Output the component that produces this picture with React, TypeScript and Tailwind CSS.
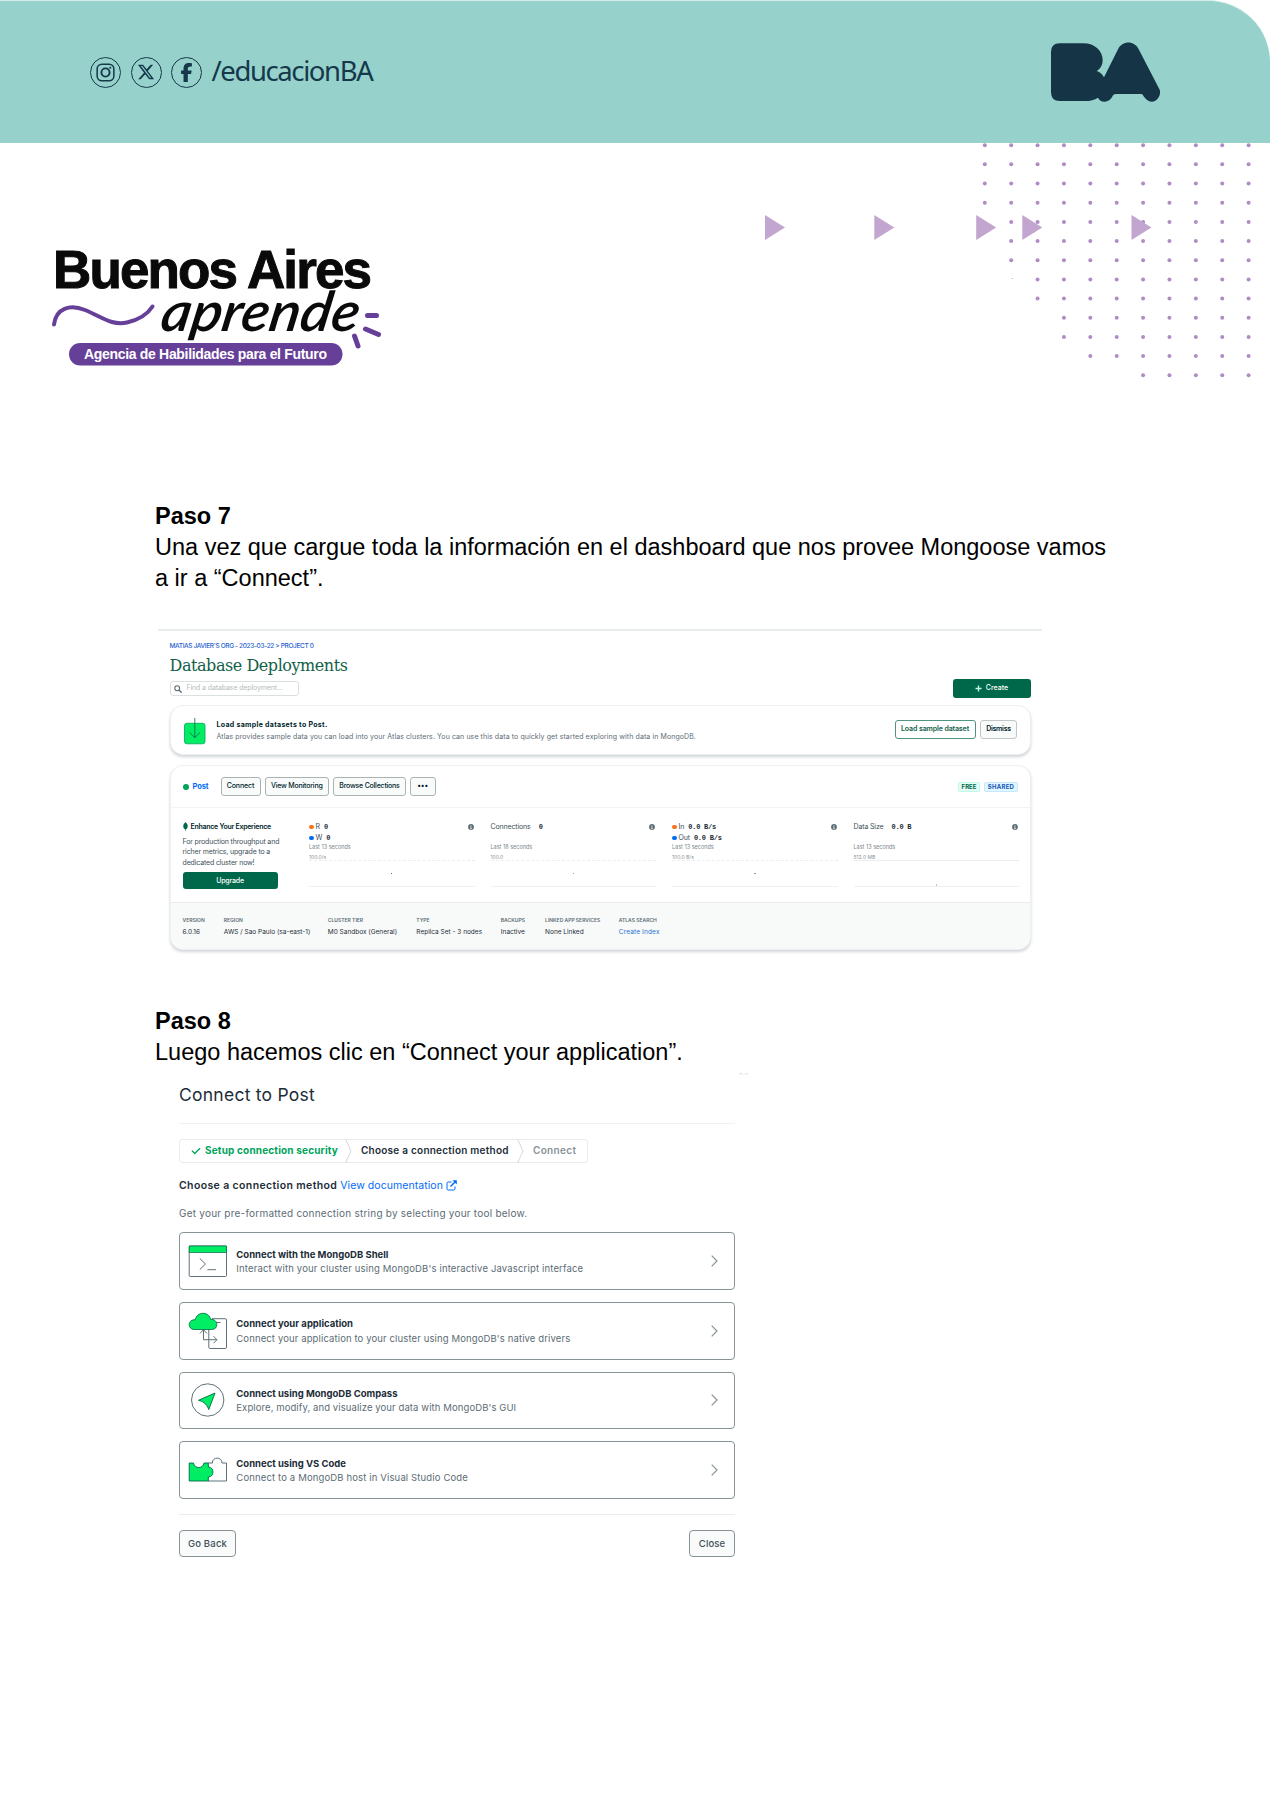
import React from 'react';
import { FaFacebookF, FaXTwitter, FaCheck } from 'react-icons/fa6';

const SANS = "font-['Inter',sans-serif]";

const dotColumns = [0, 1, 2, 3, 4, 5, 6, 7, 8, 9, 10];
const dotRowStarts = [0, 0, 0, 0, 1, 1, 1, 2, 2, 3, 3, 4, 6];
const arrowOffsets = [0, 109.3, 211.2, 257.3, 366.5];

function SocialBadge({ children }: { children: React.ReactNode }) {
  return (
    <span className="flex size-[31px] items-center justify-center rounded-full border-[1.5px] border-[#15384a]">
      {children}
    </span>
  );
}

function BaLogo() {
  return (
    <svg viewBox="270 122 335 185" className="h-[61.7px] w-[111.7px]" fill="#153547">
      <path d="M273 155Q273 129 299 129H370C405 129 428 152 428 180C428 195 420 207 410 212C420 215 428 223 432 231L474 147C486 120 524 120 536 147L599 268C604 284 592 304 575 304C562 304 555 294 549 285Q547 281 543 281H470Q462 281 459 285C454 296 447 304 434 304C424 304 417 299 414 292C404 299 390 302 375 302H299Q273 302 273 276Z" />
    </svg>
  );
}

function Header() {
  return (
    <header className="flex h-[143px] w-[1270px] items-start rounded-tr-[62px] border-t border-[#d5edea] bg-[#96d1cc] pl-[90px] pt-[40px] text-[#15384a]">
      <div className="flex h-[62px] items-center gap-[9.5px]">
        <SocialBadge>
          <svg viewBox="0 0 20 20" className="size-[19px]" fill="none" stroke="#15384a" strokeWidth="1.6">
            <rect x="1.2" y="1.2" width="17.6" height="17.6" rx="5" />
            <circle cx="10" cy="10" r="4.3" strokeWidth="2" />
            <circle cx="15" cy="5" r="1.1" fill="#15384a" stroke="none" />
          </svg>
        </SocialBadge>
        <SocialBadge>
          <FaXTwitter className="size-[18px]" />
        </SocialBadge>
        <SocialBadge>
          <FaFacebookF className="size-[19px]" />
        </SocialBadge>
        <span className="mt-[-2px] font-['Noto_Sans',sans-serif] text-[27.5px] tracking-[-1.4px] leading-none">/educacionBA</span>
      </div>
      <div className="ml-auto mr-[108.3px]">
        <BaLogo />
      </div>
    </header>
  );
}

function BrandLogo() {
  return (
    <svg viewBox="0 0 340 130" className="h-[130px] w-[340px]">
      <text x="3" y="47.5" fontFamily="'Liberation Sans', Arial, sans-serif" fontWeight="700" fontSize="53" textLength="319" lengthAdjust="spacing" fill="#0a0a0a" stroke="#0a0a0a" strokeWidth="1">Buenos Aires</text>
      <rect x="19" y="103" width="273.5" height="22.5" rx="11.2" fill="#663f98" />
      <text x="34" y="118.6" fontFamily="'Liberation Sans', Arial, sans-serif" fontWeight="700" fontSize="14" textLength="243" lengthAdjust="spacing" fill="#fff">Agencia de Habilidades para el Futuro</text>
      <text x="0" y="0" transform="translate(109 91) skewX(-10)" fontFamily="Lato, sans-serif" fontStyle="italic" fontWeight="600" fontSize="55" textLength="198" lengthAdjust="spacingAndGlyphs" fill="#0a0a0a">aprende</text>
      <path d="M4 84.5C6 68 20 64 35 70C52 77 62 86 77 82.500C88 80 97 75 102.500 66.500" fill="none" stroke="#663f98" strokeWidth="4" strokeLinecap="round" />
      <path d="M317.500 75.500H326.500M315.500 89L328.500 94.500M304.500 96L308 106" fill="none" stroke="#663f98" strokeWidth="5" strokeLinecap="round" />
    </svg>
  );
}

function Decoration() {
  return (
    <svg viewBox="0 0 500 240" className="h-[240px] w-[500px]">
      {dotRowStarts.map((start, row) =>
        dotColumns
          .filter((c) => c >= start)
          .map((c) => <circle key={`${row}-${c}`} cx={219.8 + c * 26.38} cy={2.2 + row * 19.17} r="2" fill="#b18cc4" />),
      )}
      <circle cx="247.300" cy="135.500" r="0.600" fill="#b18cc4" />
      {arrowOffsets.map((x) => (
        <path key={x} d={`M${x} 72v25l20-12.500z`} fill="#c3a6d0" />
      ))}
    </svg>
  );
}

function CreateButton() {
  return (
    <button className="mt-[-2px] flex h-[19px] w-[78px] items-center justify-center gap-[4px] rounded-[3px] bg-[#00684a] text-[7px] font-medium text-white">
      <svg viewBox="0 0 7 7" className="size-[7px]" stroke="#c0fae6" strokeWidth="1.300">
        <path d="M3.500 .500v6M.500 3.500h6" />
      </svg>
      Create
    </button>
  );
}

function SampleCard() {
  return (
    <div className="mt-[9px] flex h-[50px] w-[861px] items-start rounded-[13px] border border-[#edf0ef] bg-white pl-[13px] pr-[12.5px] shadow-[0_2px_3px_rgba(0,30,43,0.18)]">
      <svg viewBox="0 0 22 28" className="mt-[10.500px] h-[28px] w-[22px]" fill="none" stroke="#116149" strokeWidth="0.800">
        <rect x=".500" y="6.300" width="20.500" height="20.500" rx="2.200" fill="#00ed64" stroke="#00a35c" />
        <path d="M10.800 1v19.500M5.600 15.500l5.200 5.200 5.200-5.200" />
      </svg>
      <div className="ml-[11px] mt-[13px] leading-[12px]">
        <p className="text-[7px] font-bold tracking-[0.3px] text-[#001e2b]">Load sample datasets to Post.</p>
        <p className="text-[7px] tracking-[0.088px] text-[#5c6c75]">
          Atlas provides sample data you can load into your Atlas clusters. You can use this data to quickly get started exploring with data in MongoDB.
        </p>
      </div>
      <div className="ml-auto mt-[14px] flex gap-[4.500px] text-[7px] font-semibold">
        <button className="h-[19px] w-[81px] rounded-[3px] border border-[#4f9480] text-[#116149] tracking-[-0.11px]">Load sample dataset</button>
        <button className="h-[19px] w-[37px] rounded-[3px] border border-[#c1c7c6] bg-[#f9fbfa] text-[#001e2b] tracking-[-0.3px]">Dismiss</button>
      </div>
    </div>
  );
}

function InfoIcon() {
  return (
    <svg viewBox="0 0 6 6" className="ml-auto mr-[1px] size-[6px]">
      <circle cx="3" cy="3" r="2.900" fill="#5c6c75" />
      <path d="M3 1v.8M2.300 2.600H3v2M2.200 4.700h1.700" stroke="#fff" strokeWidth=".7" fill="none" />
    </svg>
  );
}

type Reading = { label: string; value: string; dot?: string };

const metrics: { readings: Reading[]; time: string; limit: string; dashed: boolean; mark: string }[] = [
  { readings: [{ label: 'R', value: '0', dot: 'bg-[#f97216]' }, { label: 'W', value: '0', dot: 'bg-[#016bf8]' }], time: 'Last 13 seconds', limit: '100.0/s', dashed: true, mark: 'mb-[12px] h-px w-px bg-[#5c6c75]' },
  { readings: [{ label: 'Connections', value: '0' }], time: 'Last 18 seconds', limit: '100.0', dashed: true, mark: 'mb-[12px] h-px w-px bg-[#c9985c]' },
  { readings: [{ label: 'In', value: '0.0 B/s', dot: 'bg-[#f97216]' }, { label: 'Out', value: '0.0 B/s', dot: 'bg-[#016bf8]' }], time: 'Last 13 seconds', limit: '100.0 B/s', dashed: true, mark: 'mb-[12px] h-px w-[2px] bg-[#a58f86]' },
  { readings: [{ label: 'Data Size', value: '0.0 B' }], time: 'Last 13 seconds', limit: '512.0 MB', dashed: false, mark: 'h-[2px] w-px bg-[#e5b78f]' },
];

function Metric({ metric }: { metric: (typeof metrics)[number] }) {
  return (
    <div className="w-[165.500px] pt-[13.500px]">
      <div className="h-[22px]">
        {metric.readings.map((r, i) => (
          <div key={r.label} className="flex h-[11px] items-center text-[7px] text-[#3d4f58]">
            {r.dot && <span className={`mr-[2px] size-[4.500px] rounded-full ${r.dot}`} />}
            <span className="tracking-[-0.14px]">{r.label}</span>
            <span className={`whitespace-pre font-['Liberation_Mono',monospace] font-bold tracking-[-0.24px] text-[#1c2d38] ${r.dot ? 'ml-[4px]' : 'ml-[8px]'}`}>
              {r.value}
            </span>
            {i === 0 && <InfoIcon />}
          </div>
        ))}
      </div>
      <p className="h-[7px] text-[5.500px] leading-[7px] text-[#7b868b]">{metric.time}</p>
      <p className="mt-[3px] h-[6px] text-[5px] leading-[6px] text-[#889397]">{metric.limit}</p>
      <div
        className={`flex h-[27px] items-end justify-center border-y border-b-[#f0f2f1] border-t-[#ebeeed] ${metric.dashed ? '[border-top-style:dashed]' : ''}`}
      >
        <span className={metric.mark} />
      </div>
    </div>
  );
}

const clusterActions = [
  { label: 'Connect', cls: 'w-[40px] tracking-[-0.09px]' },
  { label: 'View Monitoring', cls: 'w-[64.500px] tracking-[-0.2px]' },
  { label: 'Browse Collections', cls: 'w-[73px] tracking-[-0.22px]' },
  { label: '•••', cls: 'w-[25.500px] text-[4px]' },
];

const clusterFacts = [
  { label: 'VERSION', value: '6.0.16' },
  { label: 'REGION', value: 'AWS / Sao Paulo (sa-east-1)' },
  { label: 'CLUSTER TIER', value: 'M0 Sandbox (General)' },
  { label: 'TYPE', value: 'Replica Set - 3 nodes' },
  { label: 'BACKUPS', value: 'Inactive' },
  { label: 'LINKED APP SERVICES', value: 'None Linked' },
  { label: 'ATLAS SEARCH', value: 'Create Index', link: true },
];

function ClusterCard() {
  return (
    <section className="mt-[10px] h-[185px] w-[861.500px] overflow-hidden rounded-[13px] border border-[#edf0ef] bg-white shadow-[0_2px_3px_rgba(0,30,43,0.18)]">
      <div className="flex h-[42px] items-center border-b border-[#f1f4f3] pl-[12px] pr-[12px]">
        <span className="size-[6px] rounded-full bg-[#00a35c]" />
        <span className="ml-[4px] w-[28px] text-[7.500px] font-bold tracking-[-0.09px] text-[#016bf8]">Post</span>
        <div className="flex gap-[4px]">
          {clusterActions.map((a) => (
            <button key={a.label} className={`h-[18.500px] rounded-[3px] border border-[#a9b3b2] bg-[#f9fbfa] text-[7px] font-medium text-[#001e2b] ${a.cls}`}>
              {a.label}
            </button>
          ))}
        </div>
        <span className="ml-auto flex h-[10px] w-[22px] items-center justify-center rounded-[2px] border border-[#c0fae6] bg-[#e3fcf7] text-[6px] font-bold text-[#00684a]">FREE</span>
        <span className="ml-[4px] flex h-[10px] w-[34px] items-center justify-center rounded-[2px] border border-[#c3e7fe] bg-[#e1f7ff] text-[6px] font-bold tracking-[0.25px] text-[#1254b7]">SHARED</span>
      </div>
      <div className="flex h-[94px] pl-[12px]">
        <div className="w-[126.500px] pt-[13.500px] text-[7px] text-[#3d4f58]">
          <div className="flex h-[11px] items-center font-semibold tracking-[-0.27px] text-[#001e2b]">
            <svg viewBox="0 0 5 9" className="mr-[3px] mt-[-2px] h-[9px] w-[5px]">
              <path d="M2.500 0C4 1.500 5 3 4.700 4.700C4.500 6 3.700 6.900 2.800 7.500L2.700 9H2.300L2.200 7.500C1.300 6.900.500 6 .3 4.700C0 3 1 1.500 2.500 0Z" fill="#00684a" />
            </svg>
            Enhance Your Experience
          </div>
          <p className="mt-[4.500px] whitespace-pre leading-[10.300px] tracking-[-0.15px]">
            {'For production throughput and\nricher metrics, upgrade to a\ndedicated cluster now!'}
          </p>
          <button className="mt-[4.500px] h-[17px] w-[95px] rounded-[3px] bg-[#00684a] font-medium leading-[17px] tracking-[-0.17px] text-white">Upgrade</button>
        </div>
        <div className="flex gap-[16px]">
          {metrics.map((m, i) => (
            <Metric key={i} metric={m} />
          ))}
        </div>
      </div>
      <div className="grid h-full grid-cols-[41.300px_104px_88.500px_84.500px_44.300px_73.700px_100px] border-t border-[#e8edeb] bg-[#f8faf9] pl-[12px] pt-[12.500px]">
        {clusterFacts.map((f) => (
          <div key={f.label} className="whitespace-nowrap">
            <p className="text-[5px] font-semibold leading-[8px] text-[#5c6c75]">{f.label}</p>
            <p className={`mt-[4.500px] text-[6.500px] leading-[9px] ${f.link ? 'tracking-[0.15px] text-[#1f6fd6]' : 'text-[#1c2d38]'}`}>{f.value}</p>
          </div>
        ))}
      </div>
    </section>
  );
}

function Dashboard() {
  return (
    <div className={`ml-[157.500px] mt-[35px] h-[377px] w-[884px] border-t-2 border-[#e8edeb] pl-[12px] ${SANS}`}>
      <p className="mt-[11px] whitespace-pre text-[6.500px] font-medium leading-[8px] tracking-[-0.35px] text-[#1f5fcf]">
        {"MATIAS JAVIER'S ORG - 2023-03-22 > PROJECT 0"}
      </p>
      <h2 className="mt-[5.500px] font-['DejaVu_Serif',serif] text-[16px] leading-[20px] tracking-[-0.44px] text-[#116149]">Database Deployments</h2>
      <div className="mt-[5.500px] flex h-[15px] w-[861px] items-start justify-between">
        <div className="flex h-[15px] w-[129px] items-center rounded-[3px] border border-[#dbe0de] pl-[3px] text-[7px] tracking-[-0.12px] text-[#b4bdbb]">
          <svg viewBox="0 0 8 8" className="mr-[5px] size-[8px]" fill="none" stroke="#5c6c75">
            <circle cx="3.200" cy="3.200" r="2.400" strokeWidth="1.100" />
            <path d="M5 5l2.600 2.600" strokeWidth="1.400" />
          </svg>
          Find a database deployment...
        </div>
        <CreateButton />
      </div>
      <SampleCard />
      <ClusterCard />
    </div>
  );
}

function ShellIcon() {
  return (
    <svg viewBox="0 0 40 40" className="size-[40px]" fill="none" stroke="#5f7078" strokeWidth="1">
      <rect x="1.200" y="5" width="37.300" height="30.500" rx="1" />
      <rect x="1.200" y="5" width="37.300" height="6.400" fill="#00ed64" stroke="#00684a" strokeWidth=".700" />
      <path d="M11.800 17.500l5.700 5.500-5.700 5.500M19.500 28.700h8.500" />
    </svg>
  );
}

function ApplicationIcon() {
  return (
    <svg viewBox="0 0 40 40" className="size-[40px]" fill="none" stroke="#5f7078" strokeWidth="1">
      <path d="M20.800 18v18.200q0 1.300 1.300 1.300h15.100q1.300 0 1.300-1.300V9q0-1.300-1.300-1.300H24M26.500 11.500h6" />
      <path d="M15.500 19v9.700h13.300M12 22.500l3.500-3.800 3.500 3.800M25.500 25.200l3.500 3.500-3.500 3.500" />
      <path d="M6 18.500C3 18.500 1.200 16.200 1.200 13.500C1.200 10.500 3.800 8.500 7.200 8.800C8 5 11 2.300 15 2.300C19.300 2.300 22 5 22.500 8.300C26.500 8.200 28.800 10.500 28.800 13.500C28.800 16.500 26.800 18.500 23.800 18.500Z" fill="#00ed64" stroke="#00684a" strokeWidth=".800" />
    </svg>
  );
}

function CompassIcon() {
  return (
    <svg viewBox="0 0 40 40" className="size-[40px]" fill="none">
      <circle cx="19.700" cy="20" r="16.200" stroke="#5f7078" />
      <path d="M27 13L10.500 20.300C14.500 21.500 18 22.500 20.800 29.500Z" fill="#00ed64" stroke="#00684a" strokeWidth=".900" strokeLinejoin="round" />
    </svg>
  );
}

function PuzzleIcon() {
  return (
    <svg viewBox="0 0 40 40" className="size-[40px]" fill="none">
      <path d="M24.500 13H24.300C24.300 6.500 34 6.500 34 13H38.500V31H20" stroke="#5f7078" />
      <path d="M1.200 13H5.500C6.500 19 15 19 16 13H20.300V17C26.500 17 26.500 27 20.300 27V31H1.200Z" fill="#00ed64" stroke="#00684a" strokeWidth=".900" />
      <path d="M20 13h4.500" stroke="#5f7078" />
    </svg>
  );
}

const methods = [
  { icon: <ShellIcon />, title: 'Connect with the MongoDB Shell', text: "Interact with your cluster using MongoDB's interactive Javascript interface", cls: 'tracking-[0.16px]' },
  { icon: <ApplicationIcon />, title: 'Connect your application', text: "Connect your application to your cluster using MongoDB's native drivers", cls: 'tracking-[0.122px]' },
  { icon: <CompassIcon />, title: 'Connect using MongoDB Compass', text: "Explore, modify, and visualize your data with MongoDB's GUI", cls: 'tracking-[0.097px]' },
  { icon: <PuzzleIcon />, title: 'Connect using VS Code', text: 'Connect to a MongoDB host in Visual Studio Code', cls: 'tracking-[0.144px]' },
];

function StepDivider() {
  return (
    <svg viewBox="0 0 7 24" className="h-[24px] w-[7px]" fill="none" stroke="#d5dad9" strokeWidth="1">
      <path d="M.500 0L6 12L.500 24" />
    </svg>
  );
}

function ConnectPanel() {
  return (
    <div className={`relative ml-[179px] w-[556px] pt-[16px] ${SANS}`}>
      <svg viewBox="0 0 10 3" className="absolute left-[560px] top-[4px] h-[3px] w-[10px]" fill="none" stroke="#d3d8da" strokeWidth="1">
        <path d="M.500 2.500L2 1l1.500 1.500M6 2.500L7.500 1 9 2.500" />
      </svg>
      <h2 className="h-[22px] text-[17.500px] leading-[22px] tracking-[0.25px] text-[#1c2d38]">Connect to Post</h2>
      <div className="mt-[16.500px] h-px bg-[#f0f2f1]" />
      <div className="mt-[15px] flex h-[24.500px] w-[408.500px] items-center rounded-[3px] border border-[#e8edeb] pl-[11px] text-[10px] font-semibold">
        <FaCheck className="mr-[4px] size-[10px] text-[#00a35c]" />
        <span className="w-[140px] font-bold tracking-[0.164px] text-[#00a35c]">Setup connection security</span>
        <StepDivider />
        <span className="ml-[9px] w-[156px] tracking-[0.237px] text-[#1c2d38]">Choose a connection method</span>
        <StepDivider />
        <span className="ml-[9px] tracking-[0.33px] text-[#889397]">Connect</span>
      </div>
      <p className="mt-[16px] flex h-[14px] items-center text-[10.500px] text-[#1c2d38]">
        <span className="mr-[3px] font-semibold tracking-[0.372px]">Choose a connection method</span>
        <a className="flex items-center tracking-[0.061px] text-[#016bf8]">
          View documentation
          <svg viewBox="0 0 11 11" className="ml-[3px] mt-[-1px] size-[11px]" fill="none" stroke="#016bf8" strokeWidth="1.200">
            <path d="M5.500 2H2.200Q1 2 1 3.200v5.600Q1 10 2.200 10h5.600Q9 10 9 8.800V6.500" strokeWidth="1" />
            <path d="M4.500 6.500L9.500 1.500" strokeWidth="1.500" />
            <path d="M6.500.300h4.300v4.300z" fill="#016bf8" stroke="none" />
          </svg>
        </a>
      </p>
      <p className="mt-[12.500px] h-[14px] text-[10px] leading-[14px] tracking-[0.231px] text-[#5c6c75]">
        Get your pre-formatted connection string by selecting your tool below.
      </p>
      <div className="mt-[12.500px] flex flex-col gap-[12px]">
        {methods.map((m) => (
          <div key={m.title} className="flex h-[57.800px] items-center rounded-[4px] border border-[#889397] bg-white pl-[8px] pr-[16px]">
            {m.icon}
            <div className="ml-[8.300px] mt-[2px] text-[9.500px] leading-[14.200px]">
              <p className="font-bold text-[#1c2d38]">{m.title}</p>
              <p className={`text-[#5c6c75] ${m.cls}`}>{m.text}</p>
            </div>
            <svg viewBox="0 0 7 12" className="ml-auto h-[12px] w-[7px]" fill="none" stroke="#889397" strokeWidth="1.200">
              <path d="M.700.700L6 6L.700 11.300" />
            </svg>
          </div>
        ))}
      </div>
      <div className="mt-[15px] h-px bg-[#e8edeb]" />
      <div className="mt-[15px] flex justify-between text-[9.500px] font-medium text-[#3d4f58]">
        <button className="h-[27px] w-[57px] rounded-[4px] border border-[#889397] bg-[#f9fbfa] tracking-[0.2px]">Go Back</button>
        <button className="h-[27px] w-[46px] rounded-[4px] border border-[#889397] bg-[#f9fbfa] tracking-[0.1px]">Close</button>
      </div>
    </div>
  );
}

export default function App() {
  return (
    <main className="h-[1800px] w-[1274px] overflow-hidden bg-white">
      <Header />
      <div className="flex h-[358px] items-start">
        <div className="ml-[50px] mt-[97px]">
          <BrandLogo />
        </div>
        <div className="ml-auto mr-[9px]">
          <Decoration />
        </div>
      </div>
      <section className="ml-[155px] w-[1000px] font-['Liberation_Sans',Arial,sans-serif] text-[23.500px] leading-[31px] text-black">
        <h1 className="font-bold">Paso 7</h1>
        <p>
          Una vez que cargue toda la información en el dashboard que nos provee Mongoose vamos
          <br />a ir a “Connect”.
        </p>
      </section>
      <Dashboard />
      <section className="ml-[155px] w-[1000px] font-['Liberation_Sans',Arial,sans-serif] text-[23.500px] leading-[31px] text-black">
        <h1 className="font-bold">Paso 8</h1>
        <p>Luego hacemos clic en “Connect your application”.</p>
      </section>
      <ConnectPanel />
    </main>
  );
}
